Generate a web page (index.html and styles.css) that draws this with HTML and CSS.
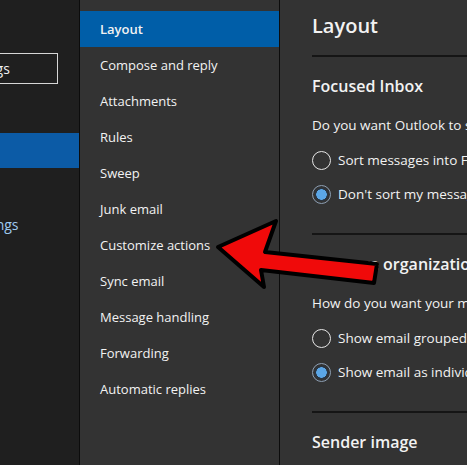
FILE: index.html
```html
<!doctype html>
<html>
    <head>
        <link rel="stylesheet" href="styles.css">
    </head>
    <body>
        <div class="app">
            <div class="side">
                <div class="side-in">
                    <div class="search">Search settings</div>
                    <div class="side-item on">Mail</div>
                    <div class="quick">View quick settings</div>
                </div>
            </div>
            <ul class="menu">
                <li class="on">Layout</li>
                <li>Compose and reply</li>
                <li>Attachments</li>
                <li>Rules</li>
                <li>Sweep</li>
                <li>Junk email</li>
                <li>Customize actions</li>
                <li>Sync email</li>
                <li>Message handling</li>
                <li>Forwarding</li>
                <li>Automatic replies</li>
            </ul>
            <div class="content">
                <h1>Layout</h1>
                <hr>
                <h2>Focused Inbox</h2>
                <p>Do you want Outlook to sort your email to help you focus on what matters most?</p>
                <label class="radio"><span class="dot"></span>Sort messages into Focused and Other</label>
                <label class="radio"><span class="dot checked"></span>Don't sort my messages</label>
                <hr class="sep">
                <h2>Message organization</h2>
                <p>How do you want your messages to be organized?</p>
                <label class="radio"><span class="dot"></span>Show email grouped by conversation</label>
                <label class="radio"><span class="dot checked"></span>Show email as individual messages</label>
                <hr class="sep">
                <h2>Sender image</h2>
            </div>
            <svg class="arrow" width="467" height="465" viewBox="0 0 467 465">
                <polygon points="218,247 276,221 265,252 377,264 374,283 261,270 264,287"
                         fill="#f00a0a" stroke="#000" stroke-width="4" stroke-linejoin="round"/>
            </svg>
        </div>
    </body>
</html>
```

FILE: styles.css
```css
*{
    margin: 0;
    padding: 0;
    box-sizing: border-box;
}
body{
    font-family: "Open Sans", "Noto Sans", sans-serif;
    color: #f2f2f2;
    background: #333;
}
ul{
    list-style: none;
}
.app{
    position: relative;
    display: flex;
    height: 465px;
    overflow: hidden;
}
.side{
    width: 80px;
    flex: none;
    background: #1f1f1f;
    border-right: 1px solid #0c0c0c;
    overflow: hidden;
}
.side-in{
    width: 230px;
    margin-left: -151px;
    padding-top: 53px;
}
.search{
    margin: 0 21px 0 50px;
    height: 31px;
    border: 1px solid #d6d6d6;
    padding-left: 11px;
    font-size: 14px;
    line-height: 29px;
    white-space: nowrap;
}
.side-item{
    margin-top: 49px;
    height: 35px;
    padding-left: 60px;
    font-size: 14px;
    line-height: 35px;
}
.side-item.on{
    background: #0c5ba6;
    color: transparent;
}
.quick{
    margin-top: 47px;
    padding-left: 46px;
    font-size: 14px;
    line-height: 20px;
    color: #9fcaf0;
    white-space: nowrap;
}
.menu{
    width: 200px;
    flex: none;
    padding-top: 11px;
    border-right: 1px solid #0c0c0c;
}
.menu li{
    height: 36px;
    padding-left: 20px;
    font-size: 13px;
    line-height: 36px;
    white-space: nowrap;
}
.menu .on{
    background: #005ea8;
    font-weight: 600;
}
.content{
    flex: 1;
    min-width: 0;
    padding: 12px 0 0 32px;
    overflow: hidden;
    white-space: nowrap;
}
h1{
    font-size: 20px;
    font-weight: 600;
    line-height: 28px;
}
hr{
    border: none;
    border-top: 2px solid #151515;
    margin-top: 15px;
}
hr.sep{
    margin-top: 29px;
}
h2{
    margin-top: 17px;
    font-size: 16px;
    font-weight: 600;
    line-height: 24px;
}
p{
    margin-top: 17px;
    font-size: 13.5px;
    line-height: 20px;
}
.radio{
    display: flex;
    align-items: center;
    gap: 7px;
    margin-top: 15px;
    font-size: 13.5px;
    line-height: 20px;
}
.radio + .radio{
    margin-top: 14px;
}
.dot{
    width: 19px;
    height: 19px;
    flex: none;
    border: 1.5px solid #e6e6e6;
    border-radius: 50%;
}
.dot.checked{
    border-color: #8d9fb3;
    background: radial-gradient(circle, #5ba6e6 0 5px, #2a3440 5.5px 6.5px, transparent 7px);
}
.arrow{
    position: absolute;
    left: 0;
    top: 0;
    pointer-events: none;
}
```
